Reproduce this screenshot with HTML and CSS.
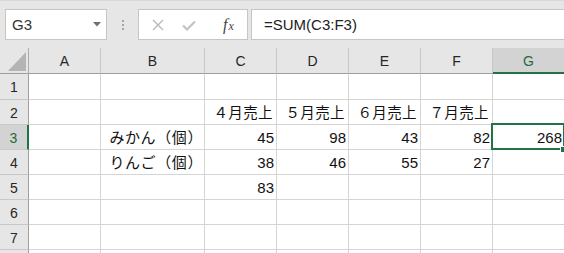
FILE: index.html
```html
<!DOCTYPE html>
<html lang="ja">
<head>
<meta charset="utf-8">
<title>Excel</title>
<link rel="stylesheet" href="styles.css">
</head>
<body>
<div class="toolbar">
  <div class="namebox">
    <span class="name">G3</span>
    <svg class="dd" width="8" height="5" viewBox="0 0 8 5"><polygon points="0,0 8,0 4,4.5" fill="#707070"/></svg>
  </div>
  <div class="grip"><i></i><i></i><i></i></div>
  <div class="fnbtns">
    <svg class="ico-x" width="12" height="12" viewBox="0 0 12 12"><path d="M1 1 L11 11 M11 1 L1 11" stroke="#b9b9b9" stroke-width="1.4" fill="none"/></svg>
    <svg class="ico-ok" width="14" height="11" viewBox="0 0 14 11"><path d="M1 5.5 L5 9.5 L13 1.5" stroke="#c3c3c3" stroke-width="2.2" fill="none"/></svg>
    <span class="fx"><span class="f">f</span><span class="x">x</span></span>
  </div>
  <div class="formula">=SUM(C3:F3)</div>
</div>
<div class="sheet">
  <div class="corner"><svg width="29" height="25" viewBox="0 0 29 25"><polygon points="26,4 26,23 8,23" fill="#b4b4b4"/></svg></div>
  <div class="ch">A</div><div class="ch">B</div><div class="ch">C</div><div class="ch">D</div><div class="ch">E</div><div class="ch">F</div><div class="ch sel">G</div>

  <div class="rh">1</div><div class="c"></div><div class="c"></div><div class="c"></div><div class="c"></div><div class="c"></div><div class="c"></div><div class="c"></div>

  <div class="rh">2</div><div class="c"></div><div class="c"></div><div class="c jp hd">４月売上</div><div class="c jp hd">５月売上</div><div class="c jp hd">６月売上</div><div class="c jp hd">７月売上</div><div class="c"></div>

  <div class="rh sel">3</div><div class="c"></div><div class="c jp">みかん（個）</div><div class="c">45</div><div class="c">98</div><div class="c">43</div><div class="c">82</div><div class="c active">268</div>

  <div class="rh">4</div><div class="c"></div><div class="c jp">りんご（個）</div><div class="c">38</div><div class="c">46</div><div class="c">55</div><div class="c">27</div><div class="c"></div>

  <div class="rh">5</div><div class="c"></div><div class="c"></div><div class="c">83</div><div class="c"></div><div class="c"></div><div class="c"></div><div class="c"></div>

  <div class="rh">6</div><div class="c"></div><div class="c"></div><div class="c"></div><div class="c"></div><div class="c"></div><div class="c"></div><div class="c"></div>

  <div class="rh">7</div><div class="c"></div><div class="c"></div><div class="c"></div><div class="c"></div><div class="c"></div><div class="c"></div><div class="c"></div>

  <div class="rh"></div><div class="c"></div><div class="c"></div><div class="c"></div><div class="c"></div><div class="c"></div><div class="c"></div><div class="c"></div>
</div>
</body>
</html>
```
FILE: styles.css
```css
html, body {
  margin: 0;
  padding: 0;
  background: #ffffff;
  overflow: hidden;
}
body {
  width: 564px;
  height: 253px;
  font-family: "Liberation Sans", "Noto Sans CJK JP", sans-serif;
  color: #222;
}
.toolbar {
  height: 48px;
  box-sizing: border-box;
  background: #e6e6e6;
  border-top: 1px solid #d9d9d9;
  display: flex;
  align-items: flex-start;
  padding: 8px 0 0 5px;
}
.namebox {
  width: 102px;
  height: 31px;
  box-sizing: border-box;
  background: #fff;
  border: 1px solid #c6c6c6;
  display: flex;
  align-items: center;
  justify-content: space-between;
  padding: 0 5px 0 6px;
}
.name {
  font-size: 15px;
  color: #333;
}
.dd { margin-top: -1px; }
.grip {
  width: 31px;
  height: 31px;
  display: flex;
  flex-direction: column;
  align-items: center;
  justify-content: center;
  gap: 2px;
}
.grip i {
  width: 2px;
  height: 2px;
  background: #a6a6a6;
}
.fnbtns {
  width: 110px;
  height: 31px;
  box-sizing: border-box;
  background: #fff;
  border: 1px solid #c6c6c6;
  display: flex;
  align-items: center;
  padding-left: 13px;
}
.ico-x { margin-right: 18px; }
.ico-ok { margin-right: 27px; margin-top: 1px; }
.fx {
  font-family: "Liberation Serif", serif;
  font-style: italic;
  color: #444;
  font-size: 16px;
  display: flex;
  align-items: baseline;
}
.fx .x { font-size: 12px; margin-left: 1px; }
.formula {
  flex: 1;
  margin-left: 3px;
  height: 31px;
  box-sizing: border-box;
  background: #fff;
  border: 1px solid #c6c6c6;
  border-right: none;
  font-size: 15px;
  color: #222;
  display: flex;
  align-items: center;
  padding-left: 12px;
}
.sheet {
  display: grid;
  grid-template-columns: 29px 72px 104px repeat(5, 72px);
  grid-template-rows: 26px 26px repeat(7, 25px);
}
.sheet > div { box-sizing: border-box; }
.corner {
  background: #e6e6e6;
  border-right: 1px solid #ababab;
  border-bottom: 1px solid #9e9e9e;
}
.corner svg { display: block; }
.ch {
  background: #e6e6e6;
  border-right: 1px solid #c8c8c8;
  border-bottom: 1px solid #9e9e9e;
  display: flex;
  align-items: center;
  justify-content: center;
  font-size: 14px;
  color: #262626;
  padding-top: 1px;
}
.ch.sel {
  background: #d3d3d3;
  border-bottom: 2px solid #217346;
  color: #1e6b41;
}
.rh {
  background: #e6e6e6;
  border-right: 1px solid #9e9e9e;
  border-bottom: 1px solid #c8c8c8;
  display: flex;
  align-items: center;
  justify-content: center;
  font-size: 14px;
  color: #262626;
  padding-top: 1px;
}
.rh.sel {
  background: #d3d3d3;
  border-right: 2px solid #217346;
  color: #1e6b41;
}
.c {
  border-right: 1px solid #d4d4d4;
  border-bottom: 1px solid #d4d4d4;
  display: flex;
  align-items: flex-end;
  justify-content: flex-end;
  padding: 0 2px 2px 0;
  font-size: 15px;
  line-height: 18px;
  color: #111;
  white-space: nowrap;
}
.c.jp {
  letter-spacing: 0.6px;
  padding-right: 1px;
}
.c.jp.hd {
  font-size: 14.5px;
  letter-spacing: 0.4px;
  padding-right: 3px;
}
.active { position: relative; }
.active::after {
  content: "";
  position: absolute;
  left: -2px;
  top: -2px;
  right: -1px;
  bottom: -1px;
  border: 2px solid #217346;
  pointer-events: none;
}
.active::before {
  content: "";
  position: absolute;
  right: -3px;
  bottom: -4px;
  width: 5px;
  height: 5px;
  background: #217346;
  border: 1px solid #fff;
  z-index: 1;
}
```
